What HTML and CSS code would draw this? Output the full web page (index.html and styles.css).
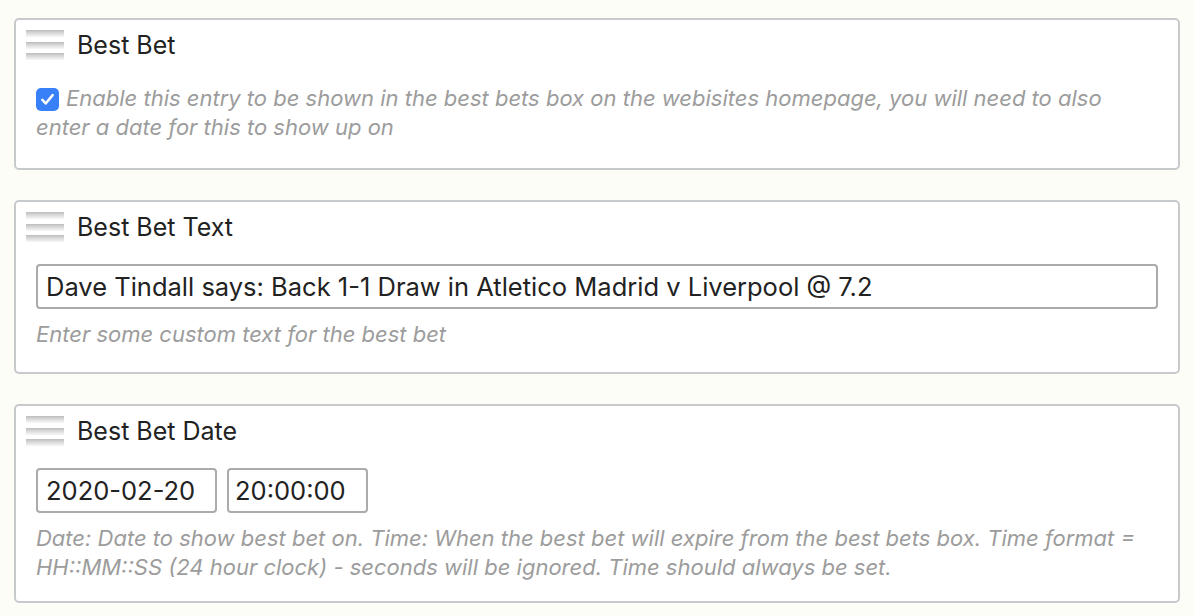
FILE: index.html
```html
<!DOCTYPE html>
<html lang="en">
<head>
<meta charset="utf-8">
<title>Best Bet</title>
<link rel="stylesheet" href="styles.css">
</head>
<body>
  <section class="panel">
    <header class="panel-head">
      <span class="handle"><i></i><i></i><i></i></span>
      <h2 class="panel-title">Best Bet</h2>
    </header>
    <div class="panel-body">
      <p class="help check-row"><span class="checkbox"><svg viewBox="0 0 24 24" width="19" height="19"><path d="M5.5 12.5l4.2 4.5L18.5 6.5" fill="none" stroke="#fff" stroke-width="3.2" stroke-linecap="round" stroke-linejoin="round"/></svg></span>Enable this entry to be shown in the best bets box on the webisites homepage, you will need to also enter a date for this to show up on</p>
    </div>
  </section>

  <section class="panel">
    <header class="panel-head">
      <span class="handle"><i></i><i></i><i></i></span>
      <h2 class="panel-title">Best Bet Text</h2>
    </header>
    <div class="panel-body">
      <input class="field field-wide" type="text" value="Dave Tindall says: Back 1-1 Draw in Atletico Madrid v Liverpool @ 7.2">
      <p class="help">Enter some custom text for the best bet</p>
    </div>
  </section>

  <section class="panel">
    <header class="panel-head">
      <span class="handle"><i></i><i></i><i></i></span>
      <h2 class="panel-title">Best Bet Date</h2>
    </header>
    <div class="panel-body panel-body-tight">
      <div class="field-row">
        <input class="field field-date" type="text" value="2020-02-20">
        <input class="field field-time" type="text" value="20:00:00">
      </div>
      <p class="help">Date: Date to show best bet on. Time: When the best bet will expire from the best bets box. Time format = HH::MM::SS (24 hour clock) - seconds will be ignored. Time should always be set.</p>
    </div>
  </section>
</body>
</html>
```

FILE: styles.css
```css
* { box-sizing: border-box; }

html, body {
  margin: 0;
  background: #fdfdf8;
}

body {
  padding: 18px 14px 0;
  font-family: Inter, "Liberation Sans", Arial, sans-serif;
  color: #222;
}

.panel {
  background: #fff;
  border: 2px solid #c7cacd;
  border-radius: 5px;
  margin-bottom: 30px;
}

.panel-head {
  display: flex;
  align-items: center;
  gap: 13px;
  padding: 10px 10px 0;
}

.handle {
  display: flex;
  flex-direction: column;
  justify-content: space-between;
  width: 38px;
  height: 30px;
  flex: none;
}

.handle i {
  display: block;
  height: 7px;
  background: linear-gradient(to bottom, #bcbcbc 0%, #dadada 45%, #f7f7f7 100%);
}

.panel-title {
  margin: 0;
  font-size: 25px;
  font-weight: 400;
  line-height: 30px;
  color: #222;
}

.panel-body {
  padding: 22px 20px 23px;
}

.panel-body-tight {
  padding-bottom: 19px;
}

.help {
  margin: 11px 0 0;
  font-size: 22px;
  line-height: 29px;
  font-style: italic;
  color: #9c9c9c;
}

.check-row {
  margin: 2px 0 3px;
}

.checkbox {
  display: inline-block;
  width: 23px;
  height: 23px;
  margin-right: 7px;
  border-radius: 5px;
  background: #3780f7;
  vertical-align: -5px;
}

.checkbox svg {
  display: block;
  margin: 2px;
}

.field {
  display: block;
  height: 45px;
  padding: 0 8px;
  border: 2px solid #ababab;
  border-radius: 4px;
  background: #fff;
  font-family: inherit;
  font-size: 25.5px;
  color: #222;
  outline: none;
}

.field-wide {
  width: 100%;
}

.field-row {
  display: flex;
  gap: 10px;
}

.field-date { width: 181px; }
.field-time { width: 141px; padding-left: 6px; }
```
